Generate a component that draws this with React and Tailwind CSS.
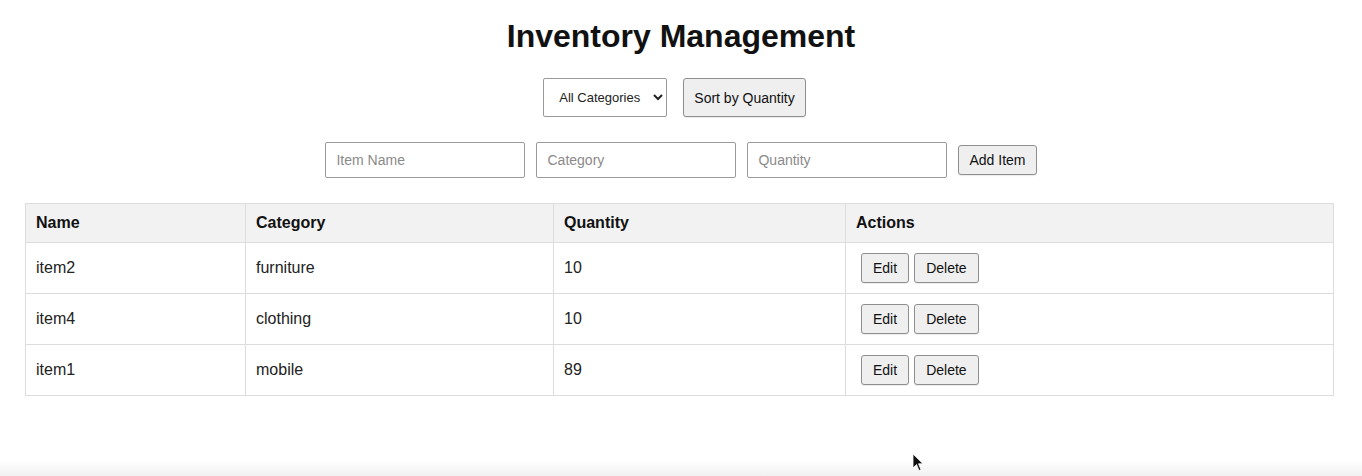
import React from "react";

const rows = [
  { name: "item2", category: "furniture", quantity: 10 },
  { name: "item4", category: "clothing", quantity: 10 },
  { name: "item1", category: "mobile", quantity: 89 },
];

const btn =
  "bg-[#efefef] border border-[#8f8f8f] rounded-[3px] text-[14px] leading-[16px] text-[#111] shadow-[0_1px_1px_rgba(0,0,0,0.08)]";

export default function App() {
  return (
    <div
      className="relative w-full h-[476px] bg-white overflow-hidden text-[#222]"
      style={{ fontFamily: '"Liberation Sans", Arial, sans-serif' }}
    >
      <div className="flex flex-col items-center pt-[18px]">
        <h1 className="text-[32px] leading-[37px] font-bold text-[#111]">
          Inventory Management
        </h1>

        <div className="flex items-center mt-[23px] pr-[13px]">
          <select className="w-[124px] h-[39px] border border-[#9a9a9a] rounded-[2px] bg-white pl-[11px] pr-[6px] text-[13px] text-[#222] mr-[16px]">
            <option>All Categories</option>
          </select>
          <button className={`${btn} h-[39px] px-[10px]`}>Sort by Quantity</button>
        </div>

        <div className="flex items-center gap-[11px] mt-[25px]">
          <input
            placeholder="Item Name"
            className="w-[200px] h-[36px] border border-[#9a9a9a] rounded-[2px] px-[10px] text-[14px] placeholder:text-[#8a8a8a]"
          />
          <input
            placeholder="Category"
            className="w-[200px] h-[36px] border border-[#9a9a9a] rounded-[2px] px-[10px] text-[14px] placeholder:text-[#8a8a8a]"
          />
          <input
            placeholder="Quantity"
            className="w-[200px] h-[36px] border border-[#9a9a9a] rounded-[2px] px-[10px] text-[14px] placeholder:text-[#8a8a8a]"
          />
          <button className={`${btn} h-[30px] px-[10px]`}>Add Item</button>
        </div>
      </div>

      <div className="pl-[25px] pr-[28px] mt-[25px]">
        <table className="w-full table-fixed border-collapse text-[16px]">
          <colgroup>
            <col className="w-[220px]" />
            <col className="w-[308px]" />
            <col className="w-[292px]" />
            <col />
          </colgroup>
          <thead>
            <tr className="bg-[#f2f2f2]">
              {["Name", "Category", "Quantity", "Actions"].map((h) => (
                <th
                  key={h}
                  className="border border-[#dddddd] px-[10px] py-[10px] text-left font-bold text-[#111] leading-[18px]"
                >
                  {h}
                </th>
              ))}
            </tr>
          </thead>
          <tbody>
            {rows.map((r) => (
              <tr key={r.name}>
                <td className="border border-[#dddddd] px-[10px] py-[10px] leading-[18px]">{r.name}</td>
                <td className="border border-[#dddddd] px-[10px] py-[10px] leading-[18px]">{r.category}</td>
                <td className="border border-[#dddddd] px-[10px] py-[10px] leading-[18px]">{r.quantity}</td>
                <td className="border border-[#dddddd] px-[10px] py-[10px]">
                  <div className="flex">
                    <button className={`${btn} h-[30px] px-[11px] ml-[5px]`}>Edit</button>
                    <button className={`${btn} h-[30px] px-[11px] ml-[5px]`}>Delete</button>
                  </div>
                </td>
              </tr>
            ))}
          </tbody>
        </table>
      </div>

      <div className="absolute left-0 right-0 bottom-0 h-[16px] bg-gradient-to-b from-white to-[#f1f1f1]" />

      <svg
        className="absolute left-[912px] top-[453px]"
        width="12"
        height="19"
        viewBox="0 0 12 19"
      >
        <path
          d="M1 1 L1 15 L4.5 11.5 L7 17.5 L9 16.7 L6.5 10.8 L11 10.8 Z"
          fill="#111"
          stroke="#fff"
          strokeWidth="0.8"
        />
      </svg>
    </div>
  );
}
